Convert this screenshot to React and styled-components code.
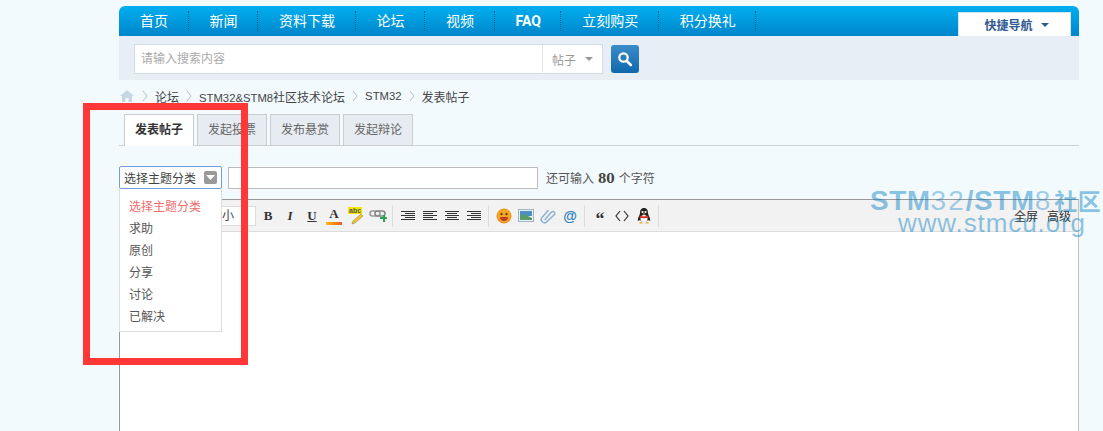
import React from 'react'
import styled, { createGlobalStyle } from 'styled-components'

const Global = createGlobalStyle`
  html, body {
    margin: 0;
    height: 431px;
    overflow: hidden;
    background: #f2fafe;
  }
  body, input {
    font-family: "Liberation Sans", "Noto Sans CJK SC", sans-serif;
    font-size: 12px;
    color: #444;
  }
`

const Page = styled.div`
  position: relative;
  width: 960px;
  margin-left: 119px;
  padding-top: 6px;
`

const Nav = styled.div`
  display: flex;
  height: 30px;
  border-radius: 6px 6px 0 0;
  background: linear-gradient(#00aff0, #0085ca);
`
const NavItem = styled.a`
  display: block;
  height: 20px;
  margin-top: 5px;
  padding: 0 19.5px 0 21px;
  line-height: 20px;
  font-size: 14px;
  font-weight: ${(p) => (p.$bold ? 'bold' : 'normal')};
  font-family: ${(p) => (p.$bold ? '"Roboto", sans-serif' : 'inherit')};
  color: #fff;
  border-right: 1px dotted #0b5f94;
`
const QuickNav = styled.div`
  display: flex;
  align-items: center;
  justify-content: center;
  gap: 8px;
  width: 113px;
  height: 24px;
  margin: 6px 8px 0 auto;
  box-sizing: border-box;
  padding-left: 4px;
  background: #fff;
  border: 1px solid #d5e3ec;
  border-bottom: 0;
  font-weight: bold;
  font-size: 12px;
  color: #2f5a8f;
`
const Caret = styled.span`
  width: 0;
  height: 0;
  border: 4px solid transparent;
  border-bottom: 0;
  border-top: 4px solid ${(p) => p.$color || '#2f5a8f'};
`

const SearchBar = styled.div`
  display: flex;
  align-items: center;
  height: 44px;
  box-sizing: border-box;
  padding: 2px 0 0 15px;
  gap: 8px;
  background: #e8eef6;
`
const SearchBox = styled.div`
  display: flex;
  width: 469px;
  height: 30px;
  box-sizing: border-box;
  background: #fff;
  border: 1px solid #cfdde4;
`
const SearchHint = styled.div`
  flex: 1;
  padding-left: 6px;
  line-height: 29px;
  color: #aaa;
`
const SearchType = styled.div`
  display: flex;
  align-items: center;
  gap: 9px;
  width: 60px;
  box-sizing: border-box;
  padding-left: 9px;
  border-left: 1px solid #dfe5e8;
  color: #999;
`
const SearchButton = styled.div`
  display: flex;
  align-items: center;
  justify-content: center;
  width: 28px;
  height: 28px;
  border-radius: 3px;
  background: linear-gradient(#3b8cca, #0f68ad);
`

const Crumbs = styled.div`
  display: flex;
  align-items: center;
  height: 34px;
  box-sizing: border-box;
  padding-bottom: 2px;
  color: #444;
`
const CrumbLatin = styled.span`
  font-size: 11.3px;
`
const CrumbArrow = styled.svg`
  width: 20px;
  height: 12px;
  flex: none;
`

const Tabs = styled.div`
  display: flex;
  gap: 3px;
  height: 32px;
  padding-left: 5px;
  box-sizing: border-box;
  border-bottom: 1px solid #c9d3da;
`
const Tab = styled.div`
  width: 70px;
  height: 32px;
  box-sizing: border-box;
  text-align: center;
  line-height: 30px;
  border: 1px solid #c9cdd0;
  border-bottom: ${(p) => (p.$active ? '0' : '1px solid #c9cdd0')};
  background: ${(p) => (p.$active ? '#fff' : '#e6ecf2')};
  font-weight: ${(p) => (p.$active ? 'bold' : 'normal')};
  color: ${(p) => (p.$active ? '#333' : '#666')};
`

const TitleRow = styled.div`
  position: relative;
  display: flex;
  align-items: center;
  height: 23px;
  margin-top: 20px;
`
const Select = styled.div`
  display: flex;
  align-items: center;
  justify-content: space-between;
  width: 103px;
  height: 23px;
  box-sizing: border-box;
  padding: 0 4px;
  background: #fff;
  border: 1px solid #6f9fe0;
  border-radius: 2px;
`
const SelectArrow = styled.span`
  display: flex;
  align-items: center;
  justify-content: center;
  width: 13px;
  height: 13px;
  border-radius: 2px;
  background: #999;
`
const TitleInput = styled.input`
  width: 310px;
  height: 22px;
  margin: 0 8px 0 6px;
  box-sizing: border-box;
  background: #fff;
  border: 1px solid #bbb;
  outline: none;
`
const Counter = styled.div`
  color: #555;
  b {
    margin: 0 4px;
    font-family: "DejaVu Serif", serif;
    font-size: 12px;
    color: #444;
  }
`
const Dropdown = styled.div`
  position: absolute;
  left: 0;
  top: 23px;
  z-index: 2;
  width: 103px;
  height: 143px;
  box-sizing: border-box;
  padding: 7px 0 0 9px;
  background: #fff;
  border: 1px solid #ddd;
  border-top: 0;
`
const Option = styled.div`
  height: 22px;
  line-height: 22px;
  color: ${(p) => (p.$active ? '#f26d6d' : '#555')};
`

const Editor = styled.div`
  margin-top: 10px;
  height: 240px;
  background: #fff;
  border: 1px solid #c4c4c4;
  border-top: 1px solid #999;
  border-left: 1px solid #999;
`
const Toolbar = styled.div`
  display: flex;
  align-items: center;
  height: 31px;
  padding-left: 76px;
  background: #f2f2f2;
  border-bottom: 1px solid #ddd;
`
const SizeBox = styled.div`
  width: 60px;
  height: 20px;
  box-sizing: border-box;
  padding-left: 13px;
  margin-right: 1px;
  line-height: 18px;
  background: #fff;
  border: 1px solid #ddd;
`
const Tool = styled.div`
  display: flex;
  flex-direction: column;
  align-items: center;
  justify-content: center;
  width: 22px;
  height: 22px;
  flex: none;
  font-family: "Liberation Serif", serif;
  font-size: 13px;
  font-weight: bold;
  font-style: ${(p) => (p.$italic ? 'italic' : 'normal')};
  text-decoration: ${(p) => (p.$under ? 'underline' : 'none')};
  color: #333;
`
const AtTool = styled(Tool)`
  font-family: "Liberation Sans", sans-serif;
  font-size: 14px;
  color: #2f80c0;
`
const QuoteTool = styled(Tool)`
  height: 15px;
  padding-top: 7px;
  font-size: 18px;
`
const ToolSep = styled.div`
  width: 1px;
  height: 22px;
  margin: 0 4px 0 3px;
  flex: none;
  background: #ddd;
`
const ToolRight = styled.div`
  display: flex;
  gap: 9px;
  margin-left: auto;
  margin-right: 7px;
  padding-bottom: 1px;
  color: #333;
`
const ColorBar = styled.span`
  width: 16px;
  height: 3px;
  background: linear-gradient(90deg, #fdb913, #f15a24);
`

const Watermark = styled.div`
  position: absolute;
  left: 751px;
  top: 187px;
  z-index: 3;
  width: 240px;
  white-space: nowrap;
  pointer-events: none;
  color: rgba(0, 125, 195, 0.45);
`
const MarkTitle = styled.div`
  height: 28px;
  line-height: 28px;
  font-size: 28px;
  font-weight: bold;
  letter-spacing: 0.5px;
`
const MarkThin = styled.span`
  font-weight: normal;
  letter-spacing: 2px;
  opacity: 0.8;
`
const MarkCjk = styled.span`
  margin-left: 2px;
  font-size: 23px;
`
const MarkUrl = styled.div`
  margin: -4px 0 0 28px;
  line-height: 24px;
  font-size: 26px;
  letter-spacing: 0.9px;
`

const Annotation = styled.div`
  position: absolute;
  left: -36px;
  top: 103px;
  z-index: 4;
  width: 165px;
  height: 262px;
  box-sizing: border-box;
  border: 7px solid #ff3737;
  pointer-events: none;
`

const navItems = ['首页', '新闻', '资料下载', '论坛', '视频', 'FAQ', '立刻购买', '积分换礼']
const tabs = ['发表帖子', '发起投票', '发布悬赏', '发起辩论']
const options = ['选择主题分类', '求助', '原创', '分享', '讨论', '已解决']

const Lines = ({ rows }) => (
  <svg width="14" height="12" viewBox="0 0 14 12" shapeRendering="crispEdges">
    {rows.map((r, i) => (
      <rect key={i} x={r[0]} y={i * 2 + 1} width={r[1]} height="1" fill="#333" />
    ))}
  </svg>
)

const Arrow = () => (
  <CrumbArrow viewBox="0 0 20 12">
    <path d="M8 1l4 5-4 5" fill="none" stroke="#b5bcc2" />
  </CrumbArrow>
)

export default function App() {
  return (
    <>
      <Global />
      <Page>
        <Nav>
          {navItems.map((n) => (
            <NavItem key={n} $bold={n === 'FAQ'}>{n}</NavItem>
          ))}
          <QuickNav>快捷导航<Caret /></QuickNav>
        </Nav>

        <SearchBar>
          <SearchBox>
            <SearchHint>请输入搜索内容</SearchHint>
            <SearchType>帖子<Caret $color="#999" /></SearchType>
          </SearchBox>
          <SearchButton>
            <svg width="16" height="16" viewBox="0 0 16 16">
              <circle cx="6.5" cy="6.5" r="4.2" fill="none" stroke="#fff" strokeWidth="2.2" />
              <path d="M9.8 10l4 4" stroke="#fff" strokeWidth="2.6" strokeLinecap="round" />
            </svg>
          </SearchButton>
        </SearchBar>

        <Crumbs>
          <svg width="16" height="12" viewBox="0 0 16 12">
            <path d="M8 0L1 6h2v6h3.500V8h3v4H13V6h2z" fill="#c9d7e2" />
          </svg>
          <Arrow />
          论坛
          <Arrow />
          <span><CrumbLatin>STM32&amp;STM8</CrumbLatin>社区技术论坛</span>
          <Arrow />
          <CrumbLatin>STM32</CrumbLatin>
          <Arrow />
          发表帖子
        </Crumbs>

        <Tabs>
          {tabs.map((t, i) => (
            <Tab key={t} $active={i === 0}>{t}</Tab>
          ))}
        </Tabs>

        <TitleRow>
          <Select>
            选择主题分类
            <SelectArrow>
              <svg width="9" height="5" viewBox="0 0 9 5"><path d="M0 0h9L4.500 5z" fill="#fff" /></svg>
            </SelectArrow>
          </Select>
          <TitleInput />
          <Counter>还可输入<b>80</b>个字符</Counter>
          <Dropdown>
            {options.map((o, i) => (
              <Option key={o} $active={i === 0}>{o}</Option>
            ))}
          </Dropdown>
        </TitleRow>

        <Editor>
          <Toolbar>
            <SizeBox>大小</SizeBox>
            <Tool>B</Tool>
            <Tool $italic>I</Tool>
            <Tool $under>U</Tool>
            <Tool>A<ColorBar /></Tool>
            <Tool>
              <svg width="18" height="18" viewBox="0 0 18 18">
                <rect x="1" y="0" width="14" height="7" fill="#f4e800" />
                <text x="2" y="6" fontSize="7" fontFamily="Liberation Sans" fontWeight="bold" fill="#555">abc</text>
                <path d="M14 7l2 2-8 7-3 1 1-3z" fill="#f2c230" stroke="#8a7a30" strokeWidth=".5" />
              </svg>
            </Tool>
            <Tool>
              <svg width="18" height="16" viewBox="0 0 18 16">
                <rect x="1" y="3" width="10" height="5" rx="2.500" fill="none" stroke="#999" strokeWidth="1.600" />
                <rect x="6" y="3" width="10" height="5" rx="2.500" fill="none" stroke="#888" strokeWidth="1.600" />
                <path d="M11 9h3V7h2v2h2v2h-2v3h-2v-3h-3z" fill="#2ba24c" />
              </svg>
            </Tool>
            <ToolSep />
            <Tool><Lines rows={[[0, 14], [4, 10], [0, 14], [4, 10], [0, 14]]} /></Tool>
            <Tool><Lines rows={[[0, 14], [0, 10], [0, 14], [0, 10], [0, 14]]} /></Tool>
            <Tool><Lines rows={[[0, 14], [2, 10], [0, 14], [2, 10], [0, 14]]} /></Tool>
            <Tool><Lines rows={[[0, 14], [4, 10], [0, 14], [4, 10], [0, 14]]} /></Tool>
            <ToolSep />
            <Tool>
              <svg width="16" height="16" viewBox="0 0 16 16">
                <circle cx="8" cy="8" r="7" fill="#f7a823" stroke="#e98a12" />
                <circle cx="5.500" cy="6" r="1.200" fill="#6b3a10" />
                <circle cx="10.500" cy="6" r="1.200" fill="#6b3a10" />
                <path d="M4 9h8c0 3-2 4-4 4s-4-1-4-4z" fill="#c0392b" />
              </svg>
            </Tool>
            <Tool>
              <svg width="16" height="13" viewBox="0 0 16 13">
                <rect x=".5" y=".5" width="15" height="12" fill="#eaf2f8" stroke="#9fb4c6" />
                <rect x="2" y="2" width="12" height="5" fill="#4d8fc4" />
                <path d="M2 7l4-2 8 4v2H2z" fill="#5c9a6b" />
              </svg>
            </Tool>
            <Tool>
              <svg width="16" height="16" viewBox="0 0 16 16">
                <path d="M5 12l6.500-7.500a2 2 0 0 1 3 2.500L7 14a3.200 3.200 0 0 1-5-4l6-7" fill="none" stroke="#8fb1d6" strokeWidth="1.500" strokeLinecap="round" transform="translate(0 -.5)" />
              </svg>
            </Tool>
            <AtTool>@</AtTool>
            <ToolSep />
            <QuoteTool>“</QuoteTool>
            <Tool>
              <svg width="14" height="12" viewBox="0 0 14 12">
                <path d="M5 1L1 6l4 5M9 1l4 5-4 5" fill="none" stroke="#333" strokeWidth="1.200" />
              </svg>
            </Tool>
            <Tool>
              <svg width="14" height="16" viewBox="0 0 14 16">
                <path d="M7 0C4 0 3 2.500 3 5c0 1-.5 2-1 3-1 2-1.500 4-1 5l2-1c1 1 2.500 2 4 2s3-1 4-2l2 1c.5-1 0-3-1-5-.5-1-1-2-1-3 0-2.500-1-5-4-5z" fill="#222" />
                <ellipse cx="7" cy="10.500" rx="3.500" ry="3.500" fill="#fff" />
                <circle cx="5.500" cy="4" r="1.100" fill="#fff" />
                <circle cx="8.500" cy="4" r="1.100" fill="#fff" />
                <path d="M5.500 5.500h3L7 7z" fill="#f5a623" />
                <path d="M3 7.500c2 1.200 6 1.200 8 0l.8 1.800c-3 1.300-6.600 1.300-9.600 0z" fill="#d9261c" />
                <path d="M2 15.500c.5-1.500 3-1.800 4 0zM8 15.500c1-1.800 3.500-1.500 4 0z" fill="#f5a623" />
              </svg>
            </Tool>
            <ToolSep />
            <ToolRight><span>全屏</span><span>高级</span></ToolRight>
          </Toolbar>
        </Editor>

        <Watermark>
          <MarkTitle>
            STM<MarkThin>32</MarkThin>/STM<MarkThin>8</MarkThin><MarkCjk>社区</MarkCjk>
          </MarkTitle>
          <MarkUrl>www.stmcu.org</MarkUrl>
        </Watermark>
        <Annotation />
      </Page>
    </>
  )
}
